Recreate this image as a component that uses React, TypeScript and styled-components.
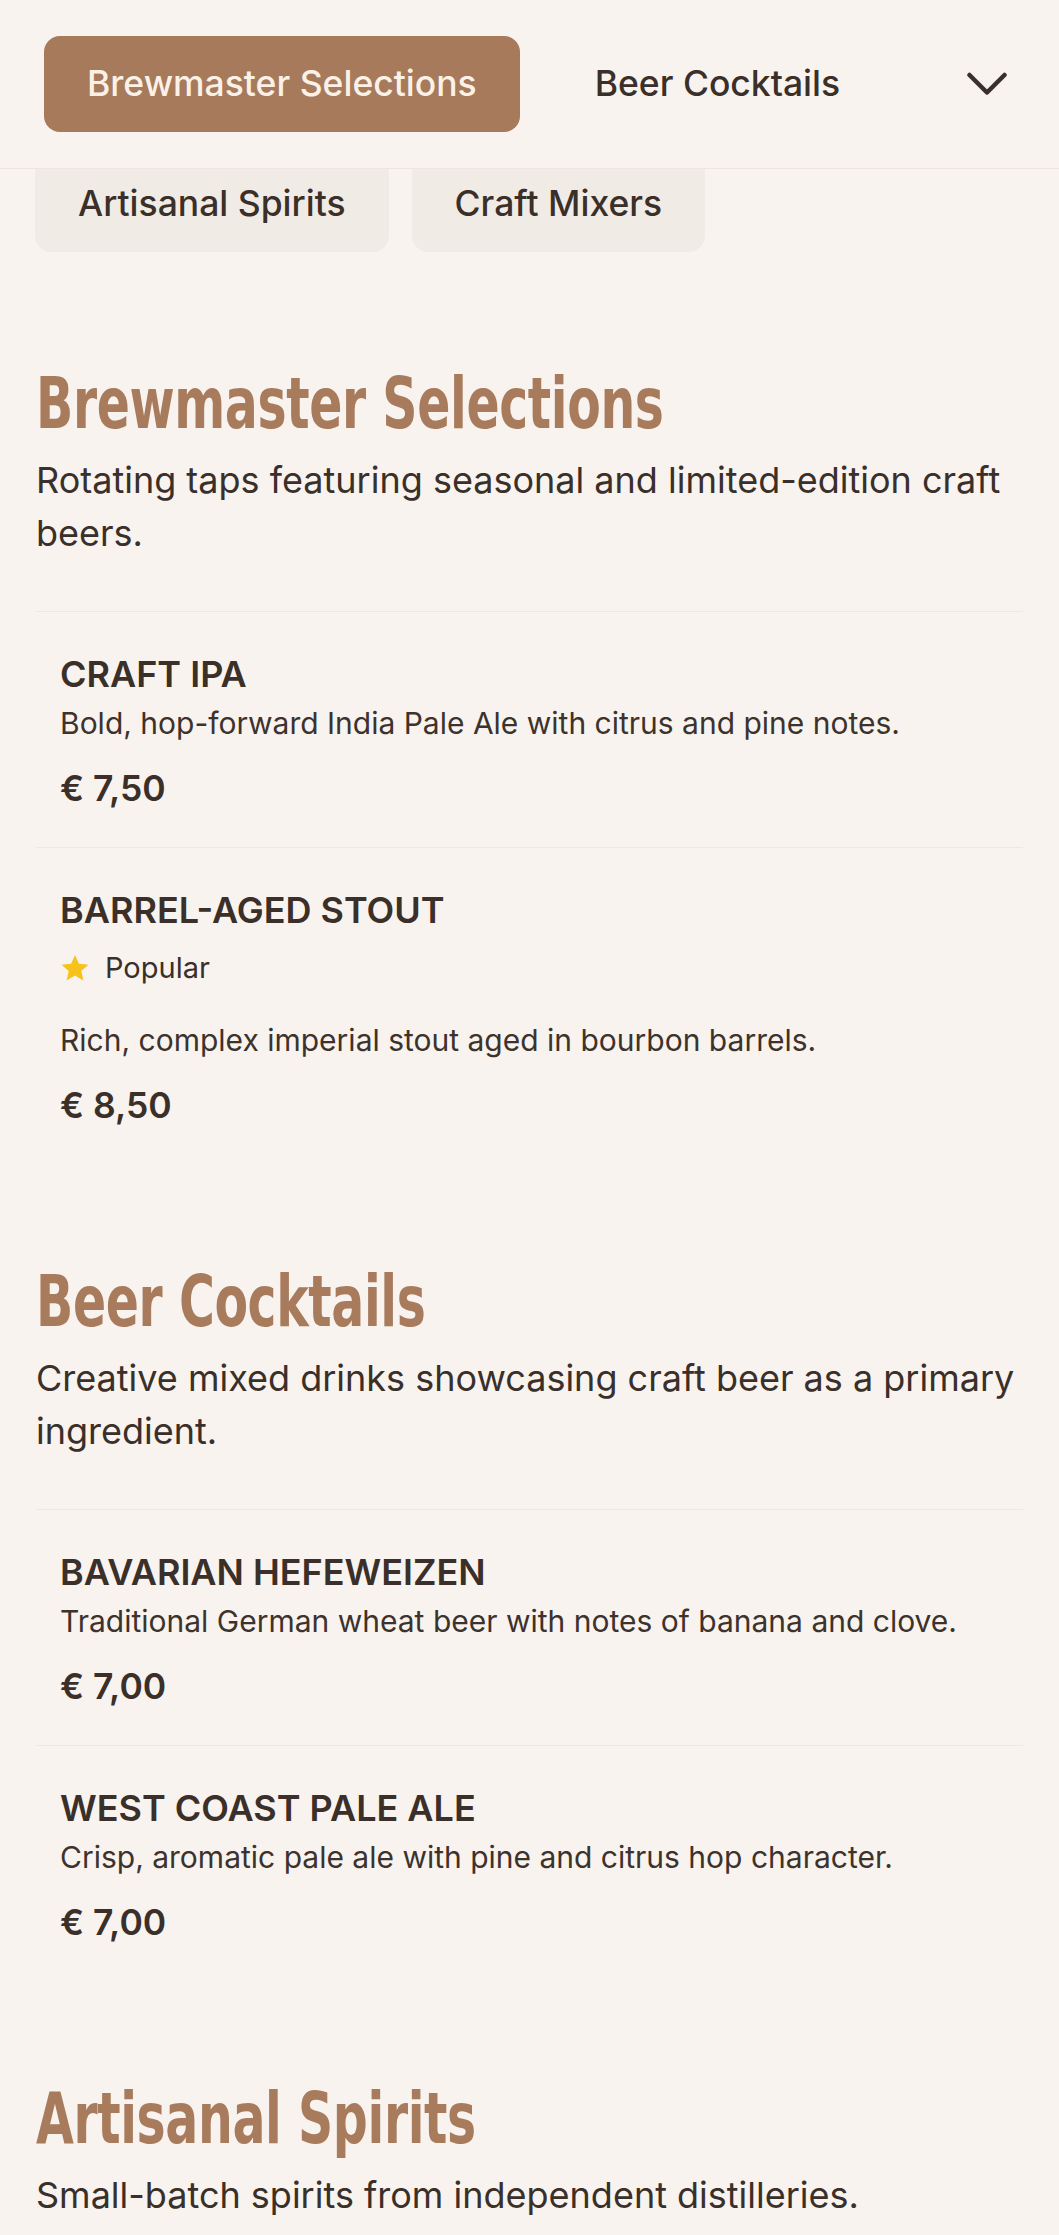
import React, { useState } from "react";
import styled, { createGlobalStyle } from "styled-components";

const GlobalStyle = createGlobalStyle`
  * {
    box-sizing: border-box;
  }
  body {
    margin: 0;
    background-color: #f8f3ef;
    color: #3a2f29;
    font-family: Inter, "Noto Sans", sans-serif;
  }
`;

type MenuItem = {
  name: string;
  description: string;
  price: string;
  popular?: boolean;
};

type MenuSection = {
  id: string;
  title: string;
  description: string;
  items: MenuItem[];
};

const sections: MenuSection[] = [
  {
    id: "brewmaster",
    title: "Brewmaster Selections",
    description: "Rotating taps featuring seasonal and limited-edition craft beers.",
    items: [
      {
        name: "CRAFT IPA",
        description: "Bold, hop-forward India Pale Ale with citrus and pine notes.",
        price: "€ 7,50",
      },
      {
        name: "BARREL-AGED STOUT",
        description: "Rich, complex imperial stout aged in bourbon barrels.",
        price: "€ 8,50",
        popular: true,
      },
    ],
  },
  {
    id: "cocktails",
    title: "Beer Cocktails",
    description: "Creative mixed drinks showcasing craft beer as a primary ingredient.",
    items: [
      {
        name: "BAVARIAN HEFEWEIZEN",
        description: "Traditional German wheat beer with notes of banana and clove.",
        price: "€ 7,00",
      },
      {
        name: "WEST COAST PALE ALE",
        description: "Crisp, aromatic pale ale with pine and citrus hop character.",
        price: "€ 7,00",
      },
    ],
  },
  {
    id: "spirits",
    title: "Artisanal Spirits",
    description: "Small-batch spirits from independent distilleries.",
    items: [],
  },
];

const Header = styled.header`
  position: sticky;
  top: 0;
  z-index: 2;
  display: flex;
  align-items: center;
  gap: 32px;
  padding: 36px 52px 36px 44px;
  background-color: #f8f3ef;
  border-bottom: 1px solid #ede6e0;
`;

const Tab = styled.button<{ $active?: boolean }>`
  height: 96px;
  padding: 0 43px;
  border: none;
  border-radius: 16px;
  font-family: Inter, "Noto Sans", sans-serif;
  font-size: 35.5px;
  font-weight: 500;
  line-height: 1;
  white-space: nowrap;
  cursor: pointer;
  color: ${(p) => (p.$active ? "#fbf1e7" : "#3a2f29")};
  background-color: ${(p) => (p.$active ? "#a67a5b" : "transparent")};
`;

const MoreButton = styled.button`
  display: flex;
  align-items: center;
  margin-left: auto;
  padding: 0;
  border: none;
  background: none;
  color: #3a2f29;
  cursor: pointer;
`;

const PillRow = styled.div`
  display: flex;
  gap: 23px;
  margin-top: -13px;
  padding: 0 35px;
`;

const Pill = styled(Tab)`
  background-color: #f1ebe6;
`;

const Main = styled.main`
  padding: 14px 36px 40px;
`;

const Section = styled.section`
  padding-top: 94px;
`;

const SectionTitle = styled.h2`
  margin: 0;
  font-family: "DejaVu Sans Condensed", "DejaVu Sans", sans-serif;
  font-size: 72px;
  font-weight: 700;
  line-height: 86px;
  letter-spacing: -0.5px;
  white-space: nowrap;
  color: #a87b5c;
  /* no condensed display face is installed, so squeeze the condensed sans */
  transform: scaleX(0.755);
  transform-origin: left center;
`;

const SectionText = styled.p`
  margin: 8px 0 51px;
  font-size: 36px;
  line-height: 53px;
  color: #3a2f29;
`;

const Item = styled.article`
  padding: 40px 24px 36px;
  border-top: 1px solid #eee7e2;
`;

const ItemName = styled.h3`
  margin: 0;
  font-size: 36px;
  font-weight: 600;
  line-height: 44px;
  color: #3a2f29;
`;

const Badge = styled.div`
  display: flex;
  align-items: center;
  gap: 15px;
  margin: 15px 0 30px;
  font-size: 29px;
  line-height: 42px;
  color: #3a2f29;
`;

const ItemText = styled.p`
  margin: 6px 0 0;
  font-size: 30px;
  line-height: 42px;
  color: #3d322c;
`;

const Price = styled.div`
  margin-top: 23px;
  font-size: 35.5px;
  font-weight: 600;
  line-height: 44px;
  color: #3a2f29;
`;

const Chevron = () => (
  <svg width="40" height="24" viewBox="0 0 40 24" fill="none">
    <polyline
      points="2.5,3 20,20.5 37.5,3"
      stroke="currentColor"
      strokeWidth="4.5"
      strokeLinecap="round"
      strokeLinejoin="round"
    />
  </svg>
);

const StarIcon = () => (
  <svg width="30" height="30" viewBox="0 0 24 24">
    <polygon
      points="12,1.5 15.1,8.6 22.8,9.3 17,14.4 18.7,22 12,18 5.3,22 7,14.4 1.2,9.3 8.9,8.6"
      fill="#f6c21b"
    />
  </svg>
);

const App = () => {
  const [active, setActive] = useState("brewmaster");

  return (
    <>
      <GlobalStyle />
      <Header>
        <Tab $active={active === "brewmaster"} onClick={() => setActive("brewmaster")}>
          Brewmaster Selections
        </Tab>
        <Tab $active={active === "cocktails"} onClick={() => setActive("cocktails")}>
          Beer Cocktails
        </Tab>
        <MoreButton aria-label="More categories">
          <Chevron />
        </MoreButton>
      </Header>
      <PillRow>
        <Pill onClick={() => setActive("spirits")}>Artisanal Spirits</Pill>
        <Pill onClick={() => setActive("mixers")}>Craft Mixers</Pill>
      </PillRow>
      <Main>
        {sections.map((section) => (
          <Section key={section.id} id={section.id}>
            <SectionTitle>{section.title}</SectionTitle>
            <SectionText>{section.description}</SectionText>
            {section.items.map((item) => (
              <Item key={item.name}>
                <ItemName>{item.name}</ItemName>
                {item.popular && (
                  <Badge>
                    <StarIcon />
                    Popular
                  </Badge>
                )}
                <ItemText>{item.description}</ItemText>
                <Price>{item.price}</Price>
              </Item>
            ))}
          </Section>
        ))}
      </Main>
    </>
  );
};

export default App;
